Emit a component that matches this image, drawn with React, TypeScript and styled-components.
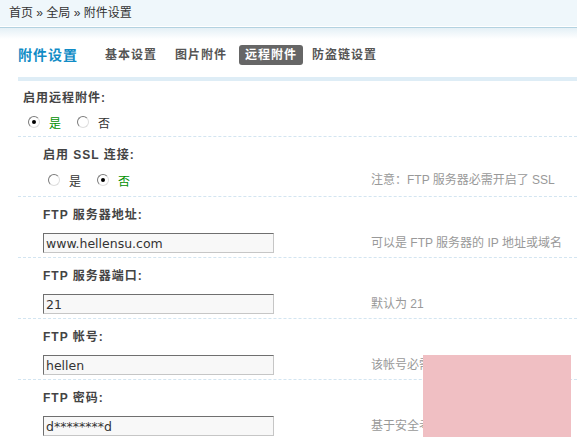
import styled, { createGlobalStyle } from 'styled-components'

const GlobalStyle = createGlobalStyle`
  html, body {
    margin: 0;
    padding: 0;
    background: #fff;
  }
  body {
    width: 577px;
    height: 437px;
    overflow: hidden;
    font: 12px 'Liberation Sans', 'Noto Sans CJK SC', sans-serif;
    color: #333;
  }
`

const Page = styled.div`
  position: relative;
  width: 577px;
  height: 437px;
  overflow: hidden;
`

const Crumbs = styled.div`
  height: 26px;
  line-height: 26px;
  padding-left: 9px;
  background: #eff7fb;
  border-bottom: 1px solid #fff;
  color: #333;
  white-space: nowrap;
`

const Head = styled.div`
  padding-left: 18px;
  background: linear-gradient(#b3d2e0 0, #b3d2e0 1px, #e4f0f6 1px, #fff 12px);
`

const TitleRow = styled.div`
  display: flex;
  align-items: center;
  padding: 18px 0 12px;
  border-bottom: 4px solid #deedf6;
  white-space: nowrap;
`

const Title = styled.h3`
  margin: 0 21px 0 0;
  font-size: 14px;
  line-height: 20px;
  letter-spacing: 1px;
  font-weight: bold;
  color: #118cc6;
`

const Tab = styled.span<{ $active?: boolean }>`
  display: inline-block;
  height: 20px;
  line-height: 20px;
  padding: 0 6px;
  margin-right: ${(p) => (p.$active ? '3px' : '6px')};
  border-radius: 3px;
  font-weight: bold;
  letter-spacing: 1px;
  color: ${(p) => (p.$active ? '#fff' : '#555')};
  background: ${(p) => (p.$active ? '#666' : 'transparent')};
`

const Form = styled.div`
  margin-left: 18px;
`

const Row = styled.div<{ $indent: number; $top: number; $bottom: number }>`
  padding: ${(p) => `${p.$top}px 0 ${p.$bottom}px ${p.$indent}px`};
  border-bottom: 1px dashed #d3e5f1;
`

const Label = styled.div`
  line-height: 20px;
  font-weight: bold;
  letter-spacing: 1px;
  color: #444;
  white-space: nowrap;
`

const Controls = styled.div<{ $gap: number }>`
  display: grid;
  grid-template-columns: 328px auto;
  align-items: center;
  margin-top: ${(p) => p.$gap}px;
  min-height: 20px;
`

const Radios = styled.div`
  display: flex;
  align-items: center;
  padding-left: 5px;
  height: 20px;
`

const Option = styled.label<{ $on?: boolean }>`
  display: inline-flex;
  align-items: center;
  margin-right: 16px;
  color: ${(p) => (p.$on ? '#009000' : '#333')};
`

const Radio = styled.input`
  appearance: none;
  position: relative;
  width: 12px;
  height: 12px;
  margin: 0 9px 0 0;
  border-radius: 50%;
  border: 1px solid;
  border-color: #7b7b7b #dedede #dedede #7b7b7b;
  background: #fff;
  box-sizing: border-box;

  &:checked::after {
    content: '';
    position: absolute;
    left: 3px;
    top: 3px;
    width: 4px;
    height: 4px;
    border-radius: 50%;
    background: #000;
  }
`

const TextInput = styled.input`
  box-sizing: border-box;
  width: 231px;
  height: 20px;
  margin: 0;
  padding: 0 2px;
  border: 1px solid;
  border-color: #6f6f6f #c6c6c6 #c6c6c6 #6f6f6f;
  background: #f8f8f8;
  font: 12.5px 'DejaVu Sans', 'Noto Sans CJK SC', sans-serif;
  color: #333;
  outline: none;
`

const Tip = styled.div`
  color: #999;
  white-space: nowrap;
  line-height: 20px;
`

const Mask = styled.div`
  position: absolute;
  left: 423px;
  top: 355px;
  width: 148px;
  height: 82px;
  background: #f0bfc3;
`

const fields = [
  { label: 'FTP 服务器地址:', value: 'www.hellensu.com', tip: '可以是 FTP 服务器的 IP 地址或域名' },
  { label: 'FTP 服务器端口:', value: '21', tip: '默认为 21' },
  { label: 'FTP 帐号:', value: 'hellen', tip: '该帐号必需具有读写权限' },
  { label: 'FTP 密码:', value: 'd********d', tip: '基于安全考虑只显示首尾' },
]

export default function App() {
  return (
    <Page>
      <GlobalStyle />
      <Crumbs>首页 » 全局 » 附件设置</Crumbs>
      <Head>
        <TitleRow>
          <Title>附件设置</Title>
          <Tab>基本设置</Tab>
          <Tab>图片附件</Tab>
          <Tab $active>远程附件</Tab>
          <Tab>防盗链设置</Tab>
        </TitleRow>
      </Head>
      <Form>
        <Row $indent={5} $top={7} $bottom={4}>
          <Label>启用远程附件:</Label>
          <Controls $gap={4}>
            <Radios>
              <Option $on>
                <Radio type="radio" name="remote" defaultChecked />是
              </Option>
              <Option>
                <Radio type="radio" name="remote" />否
              </Option>
            </Radios>
          </Controls>
        </Row>
        <Row $indent={25} $top={8} $bottom={6}>
          <Label>启用 SSL 连接:</Label>
          <Controls $gap={5}>
            <Radios>
              <Option>
                <Radio type="radio" name="ssl" />是
              </Option>
              <Option $on>
                <Radio type="radio" name="ssl" defaultChecked />否
              </Option>
            </Radios>
            <Tip>注意：FTP 服务器必需开启了 SSL</Tip>
          </Controls>
        </Row>
        {fields.map((f) => (
          <Row key={f.label} $indent={25} $top={8} $bottom={4}>
            <Label>{f.label}</Label>
            <Controls $gap={8}>
              <div>
                <TextInput defaultValue={f.value} />
              </div>
              <Tip>{f.tip}</Tip>
            </Controls>
          </Row>
        ))}
      </Form>
      <Mask />
    </Page>
  )
}
